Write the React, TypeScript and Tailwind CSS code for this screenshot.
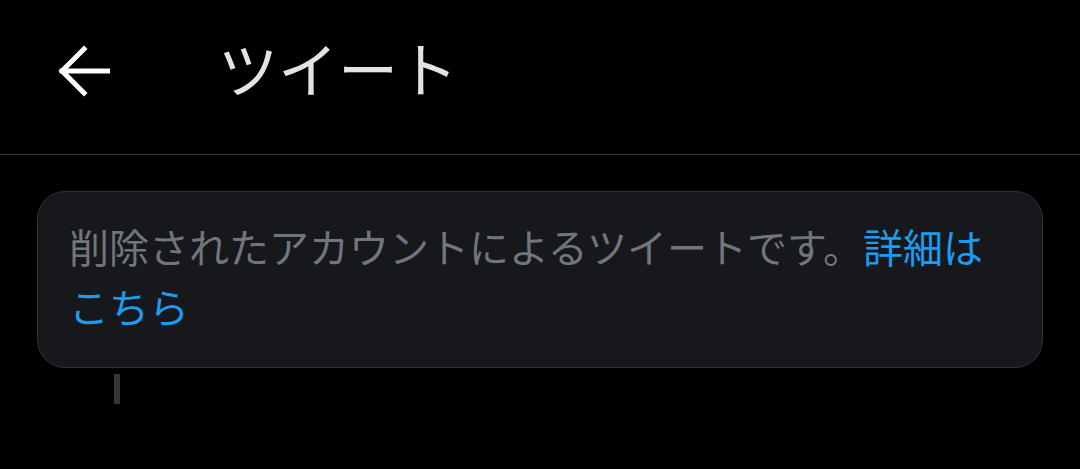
import React from "react";

export default function App() {
  return (
    <div
      className="w-[1080px] h-[469px] bg-black overflow-hidden"
      style={{ fontFamily: '"Noto Sans CJK JP", "Noto Sans", sans-serif' }}
    >
      <div className="h-[155px] flex items-center border-b border-[#2f3336]">
        <div className="w-[218px] pl-[58px] flex items-center">
          <svg width="52" height="52" viewBox="0 0 52 52" fill="none" className="-mt-[12px]">
            <path
              d="M50 26H4M26 4L4 26L26 48"
              stroke="#ffffff"
              strokeWidth="5"
              strokeLinecap="square"
              strokeLinejoin="miter"
            />
          </svg>
        </div>
        <div className="text-[60px] leading-none text-[#e3e3e3] -mt-[20px]">ツイート</div>
      </div>
      <div className="px-[37px] pt-[36px]">
        <div className="rounded-[28px] bg-[#16181c] border border-[#2f3336] pl-[31px] pr-[40px] pt-[24px] pb-[30px] h-[177px]">
          <p className="text-[40px] leading-[60px] text-[#71767b]">
            削除されたアカウントによるツイートです。<span className="text-[#1d9bf0]">詳細はこちら</span>
          </p>
        </div>
        <div className="ml-[77px] mt-[6px] w-[6px] h-[30px] bg-[#333639]" />
      </div>
    </div>
  );
}
